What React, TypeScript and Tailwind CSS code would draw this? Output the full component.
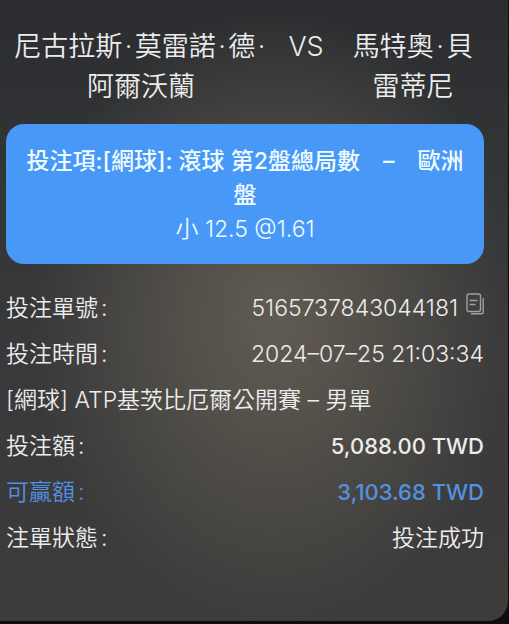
import type { ReactNode } from "react";

// Middle dot with a hair space on each side, so it stands clear of the characters.
const DOT = "\u200a·\u200a";

function PlayerName({ parts }: { parts: string[] }) {
  return <span>{parts.join(DOT)}</span>;
}

function Row({ label, tone = "", children }: { label: string; tone?: string; children: ReactNode }) {
  return (
    <div className={`flex h-[46px] items-center justify-between ${tone}`}>
      <dt>
        {label}
        <span className="pl-[3px]">:</span>
      </dt>
      <dd className="flex items-center">{children}</dd>
    </div>
  );
}

function CopyIcon() {
  return (
    <svg width="18" height="22" viewBox="0 0 18 22" fill="none" stroke="#a3a09c" strokeWidth="1.4" strokeLinecap="round" aria-hidden="true">
      <rect x="1" y="1" width="13.5" height="17.5" rx="2" />
      <path d="M4 7.5h7M4 11.5h5" />
      <path d="M17.2 5.5v13.7a1.6 1.6 0 0 1-1.6 1.6H5.5" />
    </svg>
  );
}

export default function App() {
  return (
    <div className="flex min-h-screen flex-col bg-[#0e0e11] pr-px pb-[3px] font-['Inter','Noto_Sans_CJK_TC',sans-serif] text-[23px] font-[350] text-[#ececec]">
      <main className="flex-1 rounded-br-[20px] bg-[#39393b] bg-[radial-gradient(ellipse_48%_50%_at_54%_51%,#605b52_0%,#5b574ecc_35%,#4b494500_100%),linear-gradient(180deg,#2a2c2f_0%,#333436_25%,#39393b_60%,#3d3c3b_100%)] pt-[27px] pr-6 pb-[60px] pl-1.5">
        <h1 className="grid grid-cols-[270fr_66fr_142fr] text-center text-[27px] leading-10">
          <PlayerName parts={["尼古拉斯", "莫雷諾", "德", "阿爾沃蘭"]} />
          <span className="pr-1.5">VS</span>
          <PlayerName parts={["馬特奧", "貝雷蒂尼"]} />
        </h1>

        <section className="mt-[17px] rounded-[18px] bg-[#4898f7] px-4 pt-5 pb-[18px] text-center leading-[34px] text-[#effcff]">
          <h2 className="font-medium">投注項:[網球]: 滾球 第2盤總局數　–　歐洲盤</h2>
          <p>小 12.5 @1.61</p>
        </section>

        <dl className="mt-[21px]">
          <Row label="投注單號">
            5165737843044181
            <button type="button" aria-label="複製" className="ml-2 pb-2">
              <CopyIcon />
            </button>
          </Row>
          <Row label="投注時間">2024–07–25 21:03:34</Row>
          <div className="flex h-[46px] items-center">
            <dt>[網球] ATP基茨比厄爾公開賽 – 男單</dt>
          </div>
          <Row label="投注額">
            <span className="text-[22px] font-medium">5,088.00 TWD</span>
          </Row>
          <Row label="可贏額" tone="text-[#5292e0]">
            <span className="text-[22px] font-medium">3,103.68 TWD</span>
          </Row>
          <Row label="注單狀態">投注成功</Row>
        </dl>
      </main>
    </div>
  );
}
